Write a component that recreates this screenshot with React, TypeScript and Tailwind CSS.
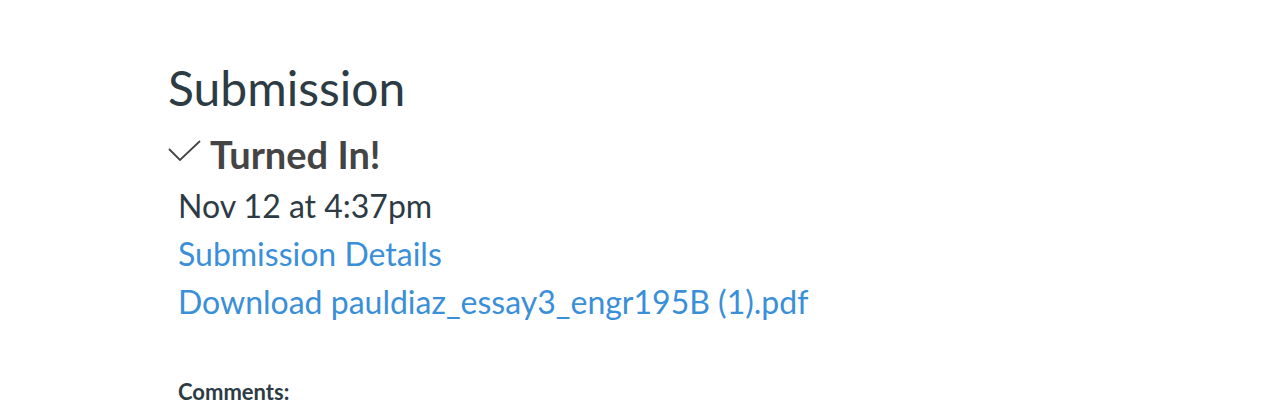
import React from 'react';

export default function App() {
  return (
    <div className="w-[1278px] h-[416px] overflow-hidden bg-white font-['Lato','Liberation_Sans',sans-serif] text-[#2d3b45]">
      <div className="pl-[168px] pt-[56px]">
        <h2 className="text-[48px] leading-[64px] font-normal">Submission</h2>
        <div className="flex items-center mt-[10px]">
          <svg width="33" height="22" viewBox="0 0 33 22" className="mr-[9px] -mt-[6px]" fill="none">
            <path d="M1 9 L12 20 L32 1" stroke="#444" strokeWidth="1.8" />
          </svg>
          <span className="text-[38px] leading-[48px] font-bold text-[#444]">Turned In!</span>
        </div>
        <div className="pl-[10px] mt-[4px] text-[32px] leading-[48px]">
          <div>Nov 12 at 4:37pm</div>
          <div className="text-[#3a8fd9]">Submission Details</div>
          <div className="text-[#3a8fd9]">Download pauldiaz_essay3_engr195B (1).pdf</div>
          <div className="mt-[52px] text-[22px] leading-[28px] font-bold">Comments:</div>
        </div>
      </div>
    </div>
  );
}
